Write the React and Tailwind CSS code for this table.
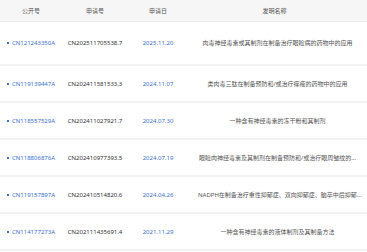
const rows = [
  { pub: "CN121243350A", app: "CN202511705538.7", date: "2025.11.20", title: "肉毒神经毒素或其制剂在制备治疗眼睑病的药物中的应用" },
  { pub: "CN119139447A", app: "CN202411581533.3", date: "2024.11.07", title: "类肉毒三肽在制备预防和/或治疗痤疮的药物中的应用" },
  { pub: "CN118557529A", app: "CN202411027921.7", date: "2024.07.30", title: "一种含有神经毒素的冻干粉和其制剂" },
  { pub: "CN118806876A", app: "CN202410977393.5", date: "2024.07.19", title: "眼睑肉神经毒素及其制剂在制备预防和/或治疗眼周皱纹的..." },
  { pub: "CN119157897A", app: "CN202410514820.6", date: "2024.04.26", title: "NADPH在制备治疗重性抑郁症、双向抑郁症、脑卒中后抑郁..." },
  { pub: "CN114177273A", app: "CN202111435691.4", date: "2021.11.29", title: "一种含有神经毒素的液体制剂及其制备方法" },
];

const cols = "grid grid-cols-[62px_66px_60px_1fr] items-center";

export default function App() {
  return (
    <div
      className="w-[367px] h-[252px] overflow-hidden bg-white text-[6px] leading-none"
      style={{ fontFamily: '"Noto Sans", "Noto Sans CJK SC", sans-serif' }}
    >
      {/* 表头 */}
      <div className={`${cols} h-[22px] bg-[#f6f6f6] text-[#555] border-b border-[#ececec]`}>
        <div className="text-center">公开号</div>
        <div className="text-center">申请号</div>
        <div className="text-center">申请日</div>
        <div className="text-center pr-[6px]">发明名称</div>
      </div>

      {rows.map((r, i) => (
        <div
          key={r.pub}
          className={`${cols} border-b-2 border-[#f3f3f3] ${i === 0 ? "h-[44px]" : "h-[37px]"}`}
        >
          <div className="flex items-center justify-center gap-[3px] text-[#3c6fd6]">
            <span className="w-[2px] h-[2px] bg-[#3c6fd6]" />
            <span>{r.pub}</span>
          </div>
          <div className="text-center text-[#333]">{r.app}</div>
          <div className="text-center text-[#3c6fd6]">{r.date}</div>
          <div className="px-[10px] text-center text-[#555] whitespace-nowrap">{r.title}</div>
        </div>
      ))}
    </div>
  );
}
